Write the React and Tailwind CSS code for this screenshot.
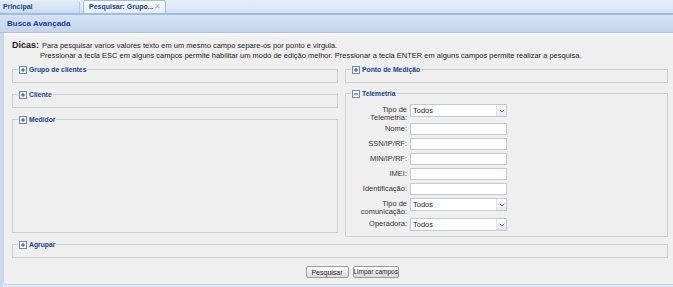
import React from "react";

function ToggleIcon({ open }) {
  return (
    <svg width="8" height="8" viewBox="0 0 8 8" className="shrink-0">
      <rect x="0.5" y="0.5" width="7" height="7" fill="#f4f7fb" stroke="#6f88ad" />
      <path d="M2 4h4" stroke="#2d4f84" strokeWidth="1" />
      {!open && <path d="M4 2v4" stroke="#2d4f84" strokeWidth="1" />}
    </svg>
  );
}

function Group({ title, open = false, className = "", children }) {
  return (
    <fieldset className={`border border-[#cfcfcf] px-[4px] pb-[8px] ${className}`}>
      <legend className="ml-[1px] px-[1px] h-[9px] flex items-center gap-[2px] text-[6.8px] font-bold text-[#15428b] leading-[9px]">
        <ToggleIcon open={open} />
        <span>{title}</span>
      </legend>
      {children}
    </fieldset>
  );
}

function TextField() {
  return <div className="h-[12px] w-[97px] bg-white border border-[#c5c8d4]"></div>;
}

function SelectField({ value = "Todos" }) {
  return (
    <div className="h-[13px] w-[97px] bg-white border border-[#c5c8d4] flex items-stretch">
      <span className="flex-1 pl-[2px] text-[7.5px] leading-[11px] text-[#222]">{value}</span>
      <span className="w-[10px] border-l border-[#dde2ea] bg-gradient-to-b from-[#fbfcfe] to-[#e3e9f2] flex items-center justify-center">
        <svg width="6" height="4" viewBox="0 0 6 4">
          <path d="M0.8 0.8 L3 3 L5.2 0.8" fill="none" stroke="#4b5a70" strokeWidth="1" />
        </svg>
      </span>
    </div>
  );
}

function Row({ label, height, children }) {
  return (
    <div className={`flex items-start ${height}`}>
      <div className="w-[60px] pr-[3px] text-right text-[7.5px] leading-[8px] text-[#333] pt-[2px]">{label}</div>
      {children}
    </div>
  );
}

export default function App() {
  return (
    <div className="w-[673px] h-[287px] overflow-hidden bg-[#dfe8f6] font-['Liberation_Sans',Arial,sans-serif] flex flex-col">
      {/* tabs */}
      <div className="h-[15px] flex items-end gap-[3px] bg-gradient-to-b from-[#e6eefa] to-[#d6e3f4] border-b-[2px] border-[#9dbde6] shrink-0">
        <div className="w-[80px] h-[12px] pl-[3px] flex items-center text-[7px] font-bold text-[#15428b] bg-gradient-to-b from-[#e2ebf7] to-[#ccdcf0] border-r border-[#b3c9e6] rounded-tr-[2px]">
          Principal
        </div>
        <div className="w-[83px] h-[13px] pl-[5px] pr-[4px] flex items-center justify-between text-[7px] font-bold text-[#15428b] bg-gradient-to-b from-[#fbfdff] to-[#e4edf9] border border-b-0 border-[#9dbde6] rounded-t-[2px]">
          <span>Pesquisar: Grupo...</span>
          <span className="text-[#a3adbb] text-[8px] font-normal leading-none">✕</span>
        </div>
      </div>
      <div className="h-[1px] bg-[#d8e4f3] shrink-0"></div>
      {/* header */}
      <div className="h-[17px] pl-[7px] flex items-center text-[8px] font-bold text-[#15428b] bg-gradient-to-b from-[#d3e0f1] to-[#c4d5ec] border-b border-[#a9c2e3] shrink-0">
        Busca Avançada
      </div>
      {/* body */}
      <div className="flex flex-1 min-h-0">
        <div className="w-[3px] bg-[#c9d9ef] shrink-0"></div>
        <div className="w-[695px] shrink-0 bg-gradient-to-b from-[#fbfbfb] to-[#efefef] to-[4px] border-l border-b border-[#d4d4d4] rounded-bl-[4px] pl-[8px] pt-[7px] pb-[6px] mb-[2px]">
          {/* Dicas */}
          <div className="text-[7.5px] text-[#222] leading-[10px]">
            <div className="flex items-baseline">
              <span className="text-[9px] font-bold text-[#1a1a1a]">Dicas:</span>
              <span className="ml-[3px]">Para pesquisar varios valores texto em um mesmo campo separe-os por ponto e virgula.</span>
            </div>
            <div className="pl-[28px]">
              Pressionar a tecla ESC em alguns campos permite habilitar um modo de edição melhor. Pressionar a tecla ENTER em alguns campos permite realizar a pesquisa.
            </div>
          </div>

          {/* fieldsets */}
          <div className="grid grid-cols-[326px_323px] gap-x-[7px] mt-[4px]">
            <div className="flex flex-col gap-[7px]">
              <Group title="Grupo de clientes" />
              <Group title="Cliente" />
              <Group title="Medidor" className="flex-1 mb-[4px]" />
            </div>
            <div className="flex flex-col gap-[6px]">
              <Group title="Ponto de Medição" />
              <Group title="Telemetria" open className="!pb-[5px]">
                <div className="pt-[6px] flex flex-col">
                  <Row label={<>Tipo de<br />Telemetria:</>} height="h-[19px]">
                    <SelectField />
                  </Row>
                  <Row label="Nome:" height="h-[15px]"><TextField /></Row>
                  <Row label="SSN/IP/RF:" height="h-[15px]"><TextField /></Row>
                  <Row label="MIN/IP/RF:" height="h-[15px]"><TextField /></Row>
                  <Row label="IMEI:" height="h-[15px]"><TextField /></Row>
                  <Row label="Identificação:" height="h-[15px]"><TextField /></Row>
                  <Row label={<>Tipo de<br />comunicação:</>} height="h-[20px]">
                    <SelectField />
                  </Row>
                  <Row label="Operadora:" height="h-[13px]">
                    <SelectField />
                  </Row>
                </div>
              </Group>
            </div>
          </div>

          <Group title="Agrupar" className="w-[656px] mt-[3px]" />

          {/* buttons */}
          <div className="flex gap-[4px] justify-center w-[680px] mt-[8px]">
            <button className="h-[12px] w-[43px] text-[7px] text-[#222] bg-gradient-to-b from-[#fdfdfd] to-[#dcdcdc] border border-[#9a9a9a] rounded-[2px] leading-none whitespace-nowrap">
              Pesquisar
            </button>
            <button className="h-[12px] w-[46px] px-0 text-[6.5px] text-[#222] bg-gradient-to-b from-[#fdfdfd] to-[#dcdcdc] border border-[#9a9a9a] rounded-[2px] leading-none whitespace-nowrap">
              Limpar campos
            </button>
          </div>
        </div>
      </div>
    </div>
  );
}
